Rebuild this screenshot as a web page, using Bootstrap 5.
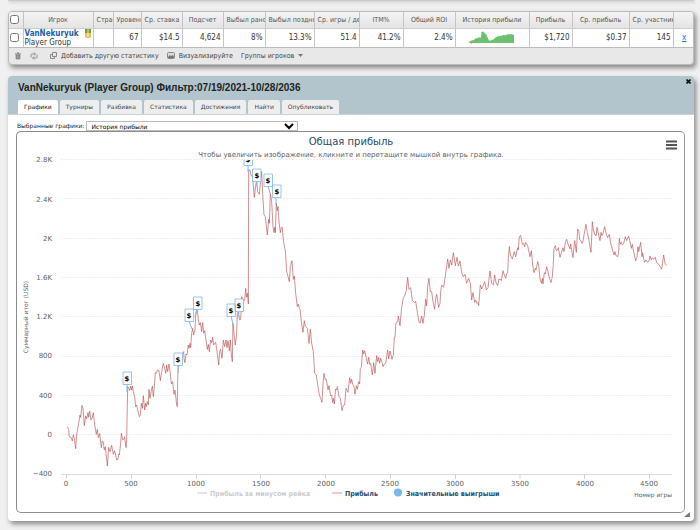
<!DOCTYPE html>
<html lang="ru">
<head>
<meta charset="utf-8">
<meta name="viewport" content="width=device-width, initial-scale=1">
<title>VanNekuryuk (Player Group)</title>
<link rel="stylesheet" href="https://cdn.jsdelivr.net/npm/bootstrap@5.3.0/dist/css/bootstrap.min.css">
<style>
body{background:#f0f0f0;color:#333;font-family:"DejaVu Sans Condensed","Noto Sans",sans-serif;font-size:8px;line-height:10px}
.prev-panel{height:1px;background:#ccc;box-shadow:1px 1px 3px #aaa}
.panel{box-shadow:2px 3px 5px #888}
.page-pad{padding:0 6px 9px 8px}
.stats{background:#e8e8e8;border:1px solid #bbb;border-radius:4px;margin-top:10px;overflow:hidden}
.stats table{table-layout:fixed;border-collapse:collapse;width:100%}
.stats th,.stats td{border-right:1px solid #c4c4c4;overflow:hidden;white-space:nowrap;padding:0 3px}
.stats th{height:16px;font-size:7px;font-weight:400;color:#555;text-align:center;background:linear-gradient(#f3f3f3,#e4e4e4);border-bottom:1px solid #ccc}
.stats td{height:19px;background:#fff;text-align:right;border-bottom:1px solid #bbb;padding:0 2px}
.stats th:last-child,.stats td:last-child{border-right:0}
.stats td.who{text-align:left;line-height:9px;padding:0 1px}
.stats th.cut{text-align:left}
.stats .tick{padding:0 0 0 1px;text-align:left}
.tick input{width:9px;height:9px;display:block;margin:0}
.who a{font-weight:700;color:#1d5ea8;text-decoration:none}
.c14{width:14px}.c70{width:70px}.c20{width:20px}.c28{width:28px}.c41{width:41px}.c42{width:42px}.c49{width:49px}.c45{width:45px}.c44{width:44px}.c52{width:52px}.c74{width:74px}.c43{width:43px}.c57{width:57px}.c22{width:22px}
.tools{height:16px;padding-left:5px;color:#444;font-size:7px}
.tools button,.closer{border:0;background:none;padding:0;color:inherit;line-height:10px}
.detail{background:#fff;border-radius:4px;margin-top:11px;padding-bottom:8px}
.detail-head{background:#b2c5cc;border-radius:4px 4px 0 0;padding:0 9px 0 10px;border-bottom:1px solid #c8d2d6}
.detail-head h1{font:700 10px/14px "Liberation Sans",Arial,sans-serif;color:#222;padding-top:5px;margin:0 0 5px}
.detail-head .nav-tabs{border:0;gap:2px}
.detail-head .nav-link{font:6px/10px "DejaVu Sans",sans-serif;color:#444;background:#eee;border:0;border-radius:2px 2px 0 0;padding:2px 6px;margin:0}
.detail-head .nav-link.active{background:#fff;color:#111}
.pick{padding:6px 9px 0 9px;font:6px/10px "DejaVu Sans",sans-serif;color:#222}
.pick label{margin-right:2px}
.pick select{font:6px/8px "DejaVu Sans",sans-serif;width:212px;height:10px;border:1px solid #bbb;border-radius:0;background:#fff;padding:0;color:#000}
.chart-box{border:1px solid #8c8c8c;border-right-color:#999;border-radius:5px;margin:0 9px 0 8px}
.chart-box svg{display:block;width:100%;height:auto;font-family:"DejaVu Sans",sans-serif;font-size:7px;fill:#606060}
.trace polyline{fill:none;stroke:#b34545;stroke-width:.6;vector-effect:non-scaling-stroke;stroke-linejoin:round}
.grip{position:absolute;right:4px;bottom:3px}
.closer{position:absolute;right:3px;top:3px;display:flex}
</style>
<script src="https://cdn.jsdelivr.net/npm/bootstrap@5.3.0/dist/js/bootstrap.bundle.min.js"></script>
</head>
<body>
<div class="page-pad">
<div class="prev-panel"></div>
<section class="stats panel">
<table>
<colgroup><col class="c14"><col class="c70"><col class="c20"><col class="c28"><col class="c41"><col class="c41"><col class="c42"><col class="c49"><col class="c45"><col class="c44"><col class="c52"><col class="c74"><col class="c43"><col class="c57"><col class="c44"><col class="c22"></colgroup>
<thead><tr><th class="tick"><input type="checkbox" aria-label="Выбрать все"></th><th>Игрок</th><th class="cut">Страна</th><th class="cut">Уровень</th><th class="cut">Ср. ставка</th><th>Подсчет</th><th class="cut">Выбыл рано</th><th class="cut">Выбыл поздно</th><th class="cut">Ср. игры / день</th><th>ITM%</th><th>Общий ROI</th><th>История прибыли</th><th>Прибыль</th><th>Ср. прибыль</th><th class="cut">Ср. участников</th><th></th></tr></thead>
<tbody><tr><td class="tick"><input type="checkbox" aria-label="VanNekuryuk"></td>
<td class="who"><div class="d-flex justify-content-between"><a href="#">VanNekuryuk</a><svg width="8" height="9" viewBox="0 0 8 9" aria-hidden="true"><path d="M1 0h6v4H1z" fill="#6fa03c"/><path d="M3 0h2v4H3z" fill="#b9c75b"/><path d="M1 4h6v4l-1 1H2L1 8z" fill="#efc45d"/><path d="M3 5h2v2H3z" fill="#fae9a4"/></svg></div><div>Player Group</div></td>
<td></td><td>67</td><td>$14.5</td><td>4,624</td><td>8%</td><td>13.3%</td><td>51.4</td><td>41.2%</td><td>2.4%</td>
<td class="text-center"><svg width="50" height="13" viewBox="0 0 50 13" aria-label="История прибыли"><path d="M1 11l3-1 1-1 1 .5L8 8l1-1 1 .5L12 6l1 1 1-1 .5-5 1-.5L17 1l1 2 1-.5 1 3 1 2 1 2h2l1-1 1 .5 1-1.500 1 0 1-2 1 1 1-2 1 1 2-1 1 .5 1-1h1l1 .5 1-1 1 .5 1-1 2 .5 2-.5 1 1h1V12H4z" fill="#6cc070"/><path d="M2 11h3v2z" fill="#e08080"/></svg></td>
<td>$1,720</td><td>$0.37</td><td>145</td><td class="text-center"><a href="#">x</a></td></tr></tbody>
</table>
<div class="tools d-flex align-items-center">
<button type="button" aria-label="Удалить" class="d-flex me-2"><svg width="8" height="8" viewBox="0 0 8 8"><path d="M1 2h6M3 1h2" stroke="#777"/><path d="M2 3h4v4H2z" fill="#999" stroke="#777" stroke-width=".6"/></svg></button>
<button type="button" aria-label="Обновить" class="d-flex me-2"><svg width="8" height="8" viewBox="0 0 8 8" fill="none" stroke="#888" stroke-width=".9"><path d="M1 5.500V3q0-1 1-1h3M4 .5L5.500 2 4 3.500M7 2.500V5q0 1-1 1H3M4 4.500L2.500 6 4 7.500"/></svg></button>
<button type="button" class="d-flex align-items-center ms-1 me-2"><svg class="me-1" width="7" height="7" viewBox="0 0 7 7" fill="none" stroke="#888"><path d="M2.500.5h4v4h-4zM2 2.500H.5v4h4V5"/></svg>Добавить другую статистику</button>
<button type="button" class="d-flex align-items-center me-2"><svg class="me-1" width="8" height="7" viewBox="0 0 8 7"><rect x=".5" y=".5" width="7" height="6" rx="1" fill="#ddd" stroke="#888"/><path d="M1 5l2-2 1 1 2-1 1 2v1H1z" fill="#777"/></svg>Визуализируйте</button>
<button type="button" class="d-flex align-items-center">Группы игроков<svg class="ms-1" width="5" height="3" viewBox="0 0 5 3"><path d="M0 0h5L2.500 3z" fill="#777"/></svg></button>
</div>
</section>

<section class="detail panel position-relative">
<header class="detail-head">
<h1>VanNekuryuk (Player Group) Фильтр:07/19/2021-10/28/2036</h1>
<button type="button" class="closer" aria-label="Закрыть"><svg width="5" height="5" viewBox="0 0 5 5"><path d="M.5.5l4 4m0-4l-4 4" stroke="#111" stroke-width="1.600"/></svg></button>
<nav class="nav nav-tabs"><button class="nav-link active">Графики</button><button class="nav-link">Турниры</button><button class="nav-link">Разбивка</button><button class="nav-link">Статистика</button><button class="nav-link">Достижения</button><button class="nav-link">Найти</button><button class="nav-link">Опубликовать</button></nav>
</header>
<div class="pick d-flex align-items-center"><label for="graph">Выбранные графики:</label><select id="graph"><option>История прибыли</option></select></div>
<div class="chart-box">
<svg viewBox="17 132 667 380" role="img" aria-label="Общая прибыль">
<defs><clipPath id="plot"><path d="M61 160h611v314H61z"/></clipPath></defs>
<text x="351" y="145" text-anchor="middle" font-size="10" fill="#274b6d">Общая прибыль</text>
<text x="351" y="157" text-anchor="middle">Чтобы увеличить изображение, кликните и перетащите мышкой внутрь графика.</text>
<path d="M666 141.500h11M666 145h11M666 148.500h11" stroke="#555" stroke-width="1.800"/>
<path d="M61 159.500h611M61 198.500h611M61 238.500h611M61 277.500h611M61 316.500h611M61 356.500h611M61 395.500h611M61 434.500h611" stroke="#eee" stroke-dasharray="2 1"/>
<path d="M61 474.500h611" stroke="#d8dce2"/>
<path d="M66.500 474v5M131.500 474v5M196.500 474v5M260.500 474v5M325.500 474v5M390.500 474v5M455.500 474v5M520 474v5M584.500 474v5M649.500 474v5" stroke="#c9d3e6"/>
<g text-anchor="end"><text x="52" y="162">2.8K</text><text x="52" y="202">2.4K</text><text x="52" y="241">2K</text><text x="52" y="280">1.6K</text><text x="52" y="319">1.2K</text><text x="52" y="358">800</text><text x="52" y="398">400</text><text x="52" y="437">0</text><text x="52" y="476">−400</text></g>
<g text-anchor="middle"><text x="66" y="486">0</text><text x="131" y="486">500</text><text x="196" y="486">1000</text><text x="261" y="486">1500</text><text x="326" y="486">2000</text><text x="390" y="486">2500</text><text x="455" y="486">3000</text><text x="520" y="486">3500</text><text x="585" y="486">4000</text><text x="649" y="486">4500</text></g>
<text transform="translate(28 317) rotate(-90)" text-anchor="middle" font-size="6">Суммарный итог (USD)</text>
<text x="672" y="497" text-anchor="end" font-size="6">Номер игры</text>
<g class="trace" clip-path="url(#plot)">
<g transform="translate(0 340) scale(.33333)"><polyline points="202,260 206,268 208,290 213,292 217,303 220,284 223,295 227,326 230,285 236,250 240,225 242,232 246,196 249,205 253,257 257,228 260,237 264,218 266,232 269,213 273,240 277,232 280,218 284,255 289,283 292,268 295,293 299,281 304,323 307,303 310,308 313,330 316,320 322,378 326,322 330,335 335,316 340,343 344,332 350,360 354,358 356,342 358,345 362,310 364,280 368,300 371,298 374,290 378,323 380,300 383,140 386,145 389,152 392,138 395,150 397,138 400,155 404,170 407,200 410,195 413,210 418,230 421,225 424,190 427,205 430,167 434,210 437,190 439,200 442,185 445,195 447,148 450,175 453,155 457,138 460,170 463,140 466,98 469,100 473,90 477,92 481,122 485,95 490,70 494,85 497,100 500,75 503,95 507,72 511,100 514,132 518,125 522,163 525,150 530,195 532,200"/></g>
<g transform="translate(110 280) scale(.33333)"><polyline points="202,380 203,300 205,262 209,250 213,225 217,222 221,215 222,235 225,248 228,222 231,225 235,195 237,205 240,190 242,203 245,160 248,145 251,165 255,150 257,105 260,90 262,88 265,120 268,135 271,128 275,155 278,128 281,160 284,152 288,180 292,208 295,193 298,215 302,180 305,188 308,172 311,195 314,190 317,187 321,215 326,255 329,215 332,208 336,235 340,180 344,200 348,180 351,203 354,182 358,212 361,180 364,225 367,245 369,130 373,170 376,195 380,160 382,100 385,95 389,120 392,118 395,50 400,60 404,62 407,25 410,52 413,40 415,72"/></g>
<g transform="translate(230 150) scale(.33333)"><polyline points="55,462 56,60 60,60 64,78 68,80 70,110 73,142 77,110 80,90 83,125 88,133 92,90 95,65 98,130 102,195 106,200 112,255 116,208 118,220 121,130 125,155 129,230 132,248 134,232 136,248 139,160 142,182 144,170 147,215 151,248 154,232 157,232 160,270 164,295 166,300 170,365 173,375 178,395 181,350 186,332 190,388 193,378 197,430 202,470 205,462 208,475 210,478"/></g>
<g transform="translate(300 240) scale(.33333)"><polyline points="0,208 4,245 9,277 13,242 16,258 22,265 27,310 31,268 35,310 40,335 44,400 49,405 53,435 58,465 62,475 66,487 69,430 72,400 76,420 79,418 84,450 87,437 92,468 95,465 98,488 100,475 103,492 107,447 110,450 112,440 117,470 121,475 126,512 130,497 134,495 138,445 144,457 149,413 152,430 155,417 158,432 162,440 165,463 169,437 172,448 176,425 179,432 181,385 184,382 188,330 191,342 194,332 198,350 203,372 206,352 209,373 212,370 217,405 221,368 225,400 230,347 233,365 236,352 239,370 242,355 246,367 249,380 253,372 257,370 263,330 266,357 270,333 276,358 280,345 283,292 285,292 288,248 293,245 295,228 300,257 305,203 310,173 315,165 319,150 323,112 327,148 332,143 337,182 344,188 347,184 351,210 357,247 361,248 365,228 369,250 373,225 377,178 380,198 383,140 387,115 391,155 395,155 399,185 404,208 407,175 410,163 416,202 420,190 422,155 425,135 431,142 437,100 443,57 447,85 451,60 455,75 460,38 466,77 471,52 475,78 480,63 485,97 490,110 495,103 500,130 506,115 511,130 515,180 519,158 524,187 527,180 531,190 534,187 536,197 541,135 545,147 549,138 554,125 559,150 564,143 567,118 570,93 575,130 580,135 584,105 588,128 593,137 597,117 600,118"/></g>
<g transform="translate(480 200) scale(.33333)"><polyline points="60,237 64,242 69,212 73,225 77,235 80,220 83,218 85,175 88,140 91,165 97,177 103,155 107,170 113,143 115,150 118,110 122,106 127,133 131,130 134,140 137,127 143,137 146,152 150,170 154,152 158,195 162,218 166,205 168,210 173,185 176,195 180,235 184,250 187,235 189,252 193,218 196,222 200,200 204,215 208,235 213,248 217,230 220,190 222,145 226,137 229,152 232,150 235,143 240,172 244,158 249,143 252,155 256,127 260,118 265,135 270,147 272,132 279,173 284,122 289,157 293,87 297,95 299,120 303,122 306,130 308,128 313,100 318,73 322,97 327,122 333,157 337,65 340,90 345,105 349,107 351,82 356,105 360,122 363,97 366,107 370,97 374,80 379,103 383,113 388,103 392,130 397,147 402,165 405,155 408,167 413,170 416,158 418,115 421,133 424,127 427,135 431,130 436,110 440,122 446,108 450,125 454,145 457,133 461,155 467,183 471,172 474,140 476,155 482,127 486,170 488,158 493,187 498,180 503,187 507,183 510,168 514,180 517,173 521,178 526,172 530,188 536,193 541,200 545,208 548,185 551,165 555,190 560,197"/></g>
</g>
<g clip-path="url(#plot)">
<path d="M127 384v8M178 365v8M189 321l3 8M197 309l-2 8M231 316l2 8M239 312l-2 7M248 165v7M257 181l-2 8M268 186l2 7M276 197v8" stroke="#7cb5ec"/>
<g fill="#fff" stroke="#7cb5ec" stroke-width=".8"><path d="M123 372h8.500v12.500H123zM174 353h8.500v12.500H174zM185 309h8.500v12.500H185zM193.500 297h8.500v12.500H193.500zM227 304h8.500v12.500H227zM235 299h8.500v12.500H235zM244 153h8.500v12.500H244zM252.500 169h8.500v12.500H252.500zM264 174h8.500v12.500H264zM272.500 185h8.500v12.500H272.500z"/></g>
<g text-anchor="middle" font-weight="700" fill="#000"><text x="127" y="381">$</text><text x="178" y="362">$</text><text x="189" y="318">$</text><text x="198" y="306">$</text><text x="231" y="313">$</text><text x="239" y="308">$</text><text x="248" y="162">$</text><text x="257" y="178">$</text><text x="268" y="183">$</text><text x="277" y="194">$</text></g>
</g>
<path d="M197 493h10" stroke="#ccc"/><path d="M332 493h10" stroke="#d99"/><circle cx="398" cy="492.500" r="4" fill="#7cb5ec"/>
<g font-weight="700" fill="#274b6d" font-family="DejaVu Sans Condensed, Noto Sans, sans-serif"><text x="210" y="496" fill="#ccc">Прибыль за минусом рейка</text><text x="345" y="496">Прибыль</text><text x="406" y="496">Значительные выигрыши</text></g>
</svg>
</div>
<svg class="grip" width="6" height="6" viewBox="0 0 6 6" aria-hidden="true"><path d="M6 0v5H0z" fill="#777"/></svg>
</section>
</div>
</body>
</html>
